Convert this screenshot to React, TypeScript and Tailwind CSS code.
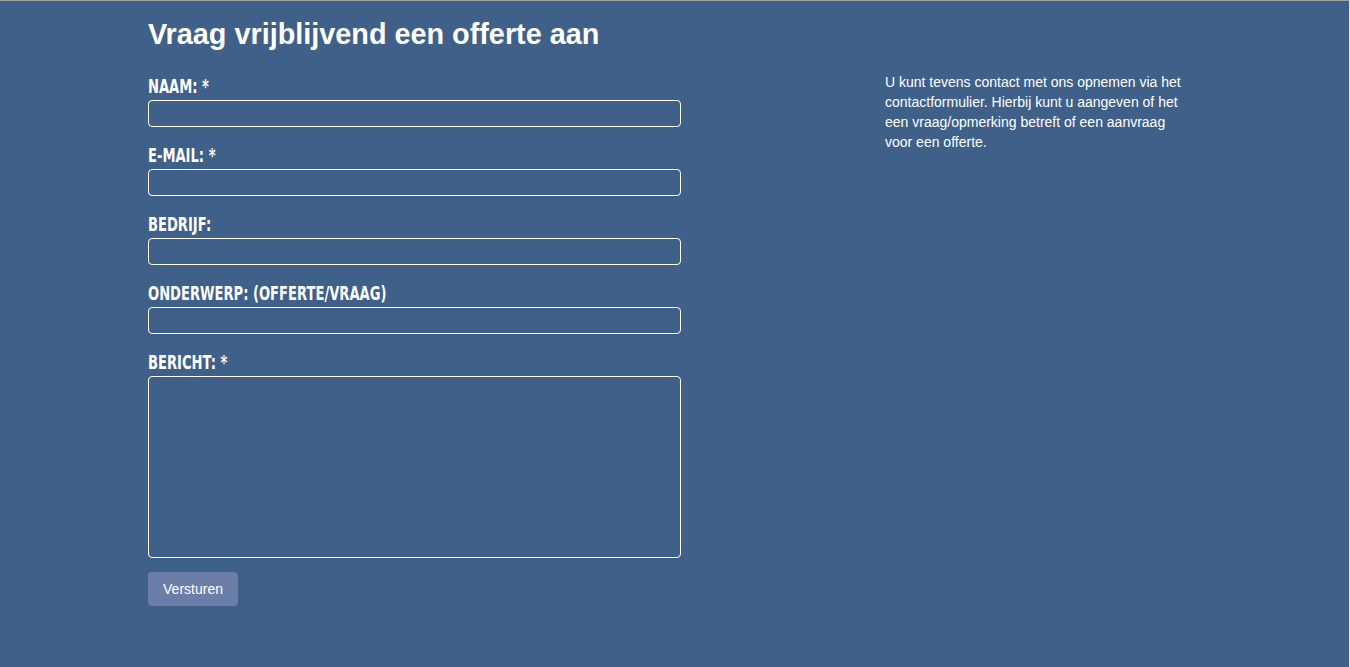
const fields = [
  { label: 'Naam: *', name: 'naam' },
  { label: 'E-mail: *', name: 'email' },
  { label: 'Bedrijf:', name: 'bedrijf' },
  { label: 'Onderwerp: (offerte/vraag)', name: 'onderwerp' },
];

const labelCls =
  "block w-max origin-left scale-x-[0.69] whitespace-nowrap h-[22px] text-[19px] leading-[16px] font-bold uppercase text-white [font-family:'DejaVu_Sans',sans-serif]";

export default function App() {
  return (
    <div className="min-h-[667px] w-full bg-[#3f6089] border-t border-[#a3a3a3] border-r border-r-[#dfe4ec] [font-family:'Liberation_Sans',Arial,sans-serif]">
      <div className="flex pl-[148px] pt-[16px]">
        <div className="w-[533px]">
          <h1 className="text-[28.8px] leading-[34px] font-bold text-white">Vraag vrijblijvend een offerte aan</h1>
          <form className="mt-[27px]">
            {fields.map((f) => (
              <div key={f.name} className="mb-[20px]">
                <label htmlFor={f.name} className={labelCls}>{f.label}</label>
                <input
                  id={f.name}
                  type="text"
                  className="block w-full h-[27px] rounded-[4px] border border-white bg-transparent"
                />
              </div>
            ))}
            <div>
              <label htmlFor="bericht" className={labelCls}>Bericht: *</label>
              <textarea
                id="bericht"
                className="block w-full h-[182px] rounded-[4px] border border-white bg-transparent resize-none"
              />
            </div>
            <button
              type="button"
              className="mt-[14px] h-[34px] w-[90px] rounded-[4px] bg-[#6c7da8] text-[14px] text-white"
            >
              Versturen
            </button>
          </form>
        </div>
        <div className="ml-[204px] mt-[55px] w-[306px] text-[14px] leading-[20px] text-white">
          U kunt tevens contact met ons opnemen via het contactformulier. Hierbij kunt u aangeven of het een vraag/opmerking betreft of een aanvraag voor een offerte.
        </div>
      </div>
    </div>
  );
}
